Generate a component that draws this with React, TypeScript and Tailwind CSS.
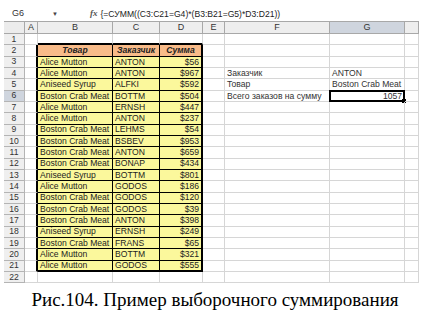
import clsx from "clsx";

const COLS = ["A", "B", "C", "D", "E", "F", "G", ""];

const data: [string, string, string][] = [
    ["Alice Mutton", "ANTON", "$56"],
    ["Alice Mutton", "ANTON", "$967"],
    ["Aniseed Syrup", "ALFKI", "$592"],
    ["Boston Crab Meat", "BOTTM", "$504"],
    ["Alice Mutton", "ERNSH", "$447"],
    ["Alice Mutton", "ANTON", "$237"],
    ["Boston Crab Meat", "LEHMS", "$54"],
    ["Boston Crab Meat", "BSBEV", "$953"],
    ["Boston Crab Meat", "ANTON", "$659"],
    ["Boston Crab Meat", "BONAP", "$434"],
    ["Aniseed Syrup", "BOTTM", "$801"],
    ["Alice Mutton", "GODOS", "$186"],
    ["Boston Crab Meat", "GODOS", "$120"],
    ["Boston Crab Meat", "GODOS", "$39"],
    ["Boston Crab Meat", "ANTON", "$398"],
    ["Aniseed Syrup", "ERNSH", "$249"],
    ["Boston Crab Meat", "FRANS", "$65"],
    ["Alice Mutton", "BOTTM", "$321"],
    ["Alice Mutton", "GODOS", "$555"],
];

// side panel F/G
const side: Record<number, [string, string]> = {
    4: ["Заказчик", "ANTON"],
    5: ["Товар", "Boston Crab Meat"],
    6: ["Всего заказов на сумму", "1057"],
};

function Cell({ row, col }: { row: number; col: number }) {
    // col: 0=A ... 7=H
    const inTable = row >= 2 && row <= 21 && col >= 1 && col <= 3;
    const isHead = row === 2 && inTable;
    let text = "";
    let right = false;

    if (isHead) text = ["Товар", "Заказчик", "Сумма"][col - 1];
    else if (inTable) {
        text = data[row - 3][col - 1];
        right = col === 3;
    }
    if (side[row] && col === 5) text = side[row][0];
    if (side[row] && col === 6) {
        text = side[row][1];
        right = row === 6;
    }

    const selected = row === 6 && col === 6;

    return (
        <div
            className={clsx(
                "relative flex items-center overflow-visible whitespace-nowrap border-r border-b px-[2px] leading-none",
                isHead && "justify-center bg-[#f8bb89] font-bold italic text-[#222]",
                inTable && !isHead && "bg-[#fbf89c] text-[#222]",
                !inTable && "border-[#d6d6d6] text-[#333]",
                inTable && "border-black",
                right && "justify-end",
                // thick outline around B2:D21
                col === 0 && row >= 2 && row <= 21 && "border-r-2 border-r-black",
                col === 3 && row >= 2 && row <= 21 && "border-r-2",
                row === 1 && col >= 1 && col <= 3 && "border-b-2 border-b-black",
                row === 21 && col >= 1 && col <= 3 && "border-b-2",
                row === 2 && col >= 1 && col <= 3 && "border-b-[1px]"
            )}
        >
            {text}
            {selected && (
                <span className="pointer-events-none absolute -top-[1px] -left-[1px] -right-[1px] -bottom-[1px] border-2 border-black">
                    <span className="absolute -right-[3px] -bottom-[3px] h-[4px] w-[4px] bg-black" />
                </span>
            )}
        </div>
    );
}

export default function App() {
    const rows = Array.from({ length: 22 }, (_, i) => i + 1);

    return (
        <div
            className="flex h-[315px] w-[430px] flex-col overflow-hidden bg-white"
            style={{ fontFamily: '"Liberation Sans", Arial, sans-serif' }}
        >
            {/* formula bar */}
            <div className="mt-[7px] flex h-[14px] items-center text-[9px] text-[#333]">
                <span className="ml-[12px] w-[40px]">G6</span>
                <span className="text-[6px] text-[#444]">▼</span>
                <span
                    className="ml-[32px] mr-[3px] text-[9px] font-bold italic text-[#555]"
                    style={{ fontFamily: '"Liberation Serif", serif' }}
                >
                    fx
                </span>
                <span className="text-[8.6px] text-[#222]">{"{=СУММ((C3:C21=G4)*(B3:B21=G5)*D3:D21))"}</span>
            </div>

            {/* sheet */}
            <div className="ml-[4px] grid grid-cols-[21px_13px_75px_47px_43px_22px_105px_75px_14px] grid-rows-[13px_repeat(22,11.33px)] text-[8.6px]">
                <div className="border-t border-r border-b border-[#a8a8a8] bg-[#ececec]" />
                {COLS.map((c, i) => (
                    <div
                        key={i}
                        className={clsx(
                            "flex items-center justify-center border-t border-r border-b border-[#a8a8a8] text-[9px] text-[#333]",
                            c === "G" ? "bg-[#cfd5de]" : "bg-[#eeeeee]"
                        )}
                    >
                        {c}
                    </div>
                ))}
                {rows.map((r) => (
                    <div key={r} className="contents">
                        <div
                            className={clsx(
                                "flex items-center justify-center border-r border-b border-[#b4b4b4] text-[8.6px] text-[#333]",
                                r === 6 ? "bg-[#cfd5de]" : "bg-[#efefef]"
                            )}
                        >
                            {r}
                        </div>
                        {COLS.map((c, ci) => (
                            <Cell key={ci} row={r} col={ci} />
                        ))}
                    </div>
                ))}
            </div>

            {/* caption */}
            <div
                className="flex flex-1 items-center justify-center pt-[3px] text-[19px] text-black"
                style={{ fontFamily: '"Liberation Serif", "Times New Roman", serif' }}
            >
                Рис.104. Пример выборочного суммирования
            </div>
        </div>
    );
}
